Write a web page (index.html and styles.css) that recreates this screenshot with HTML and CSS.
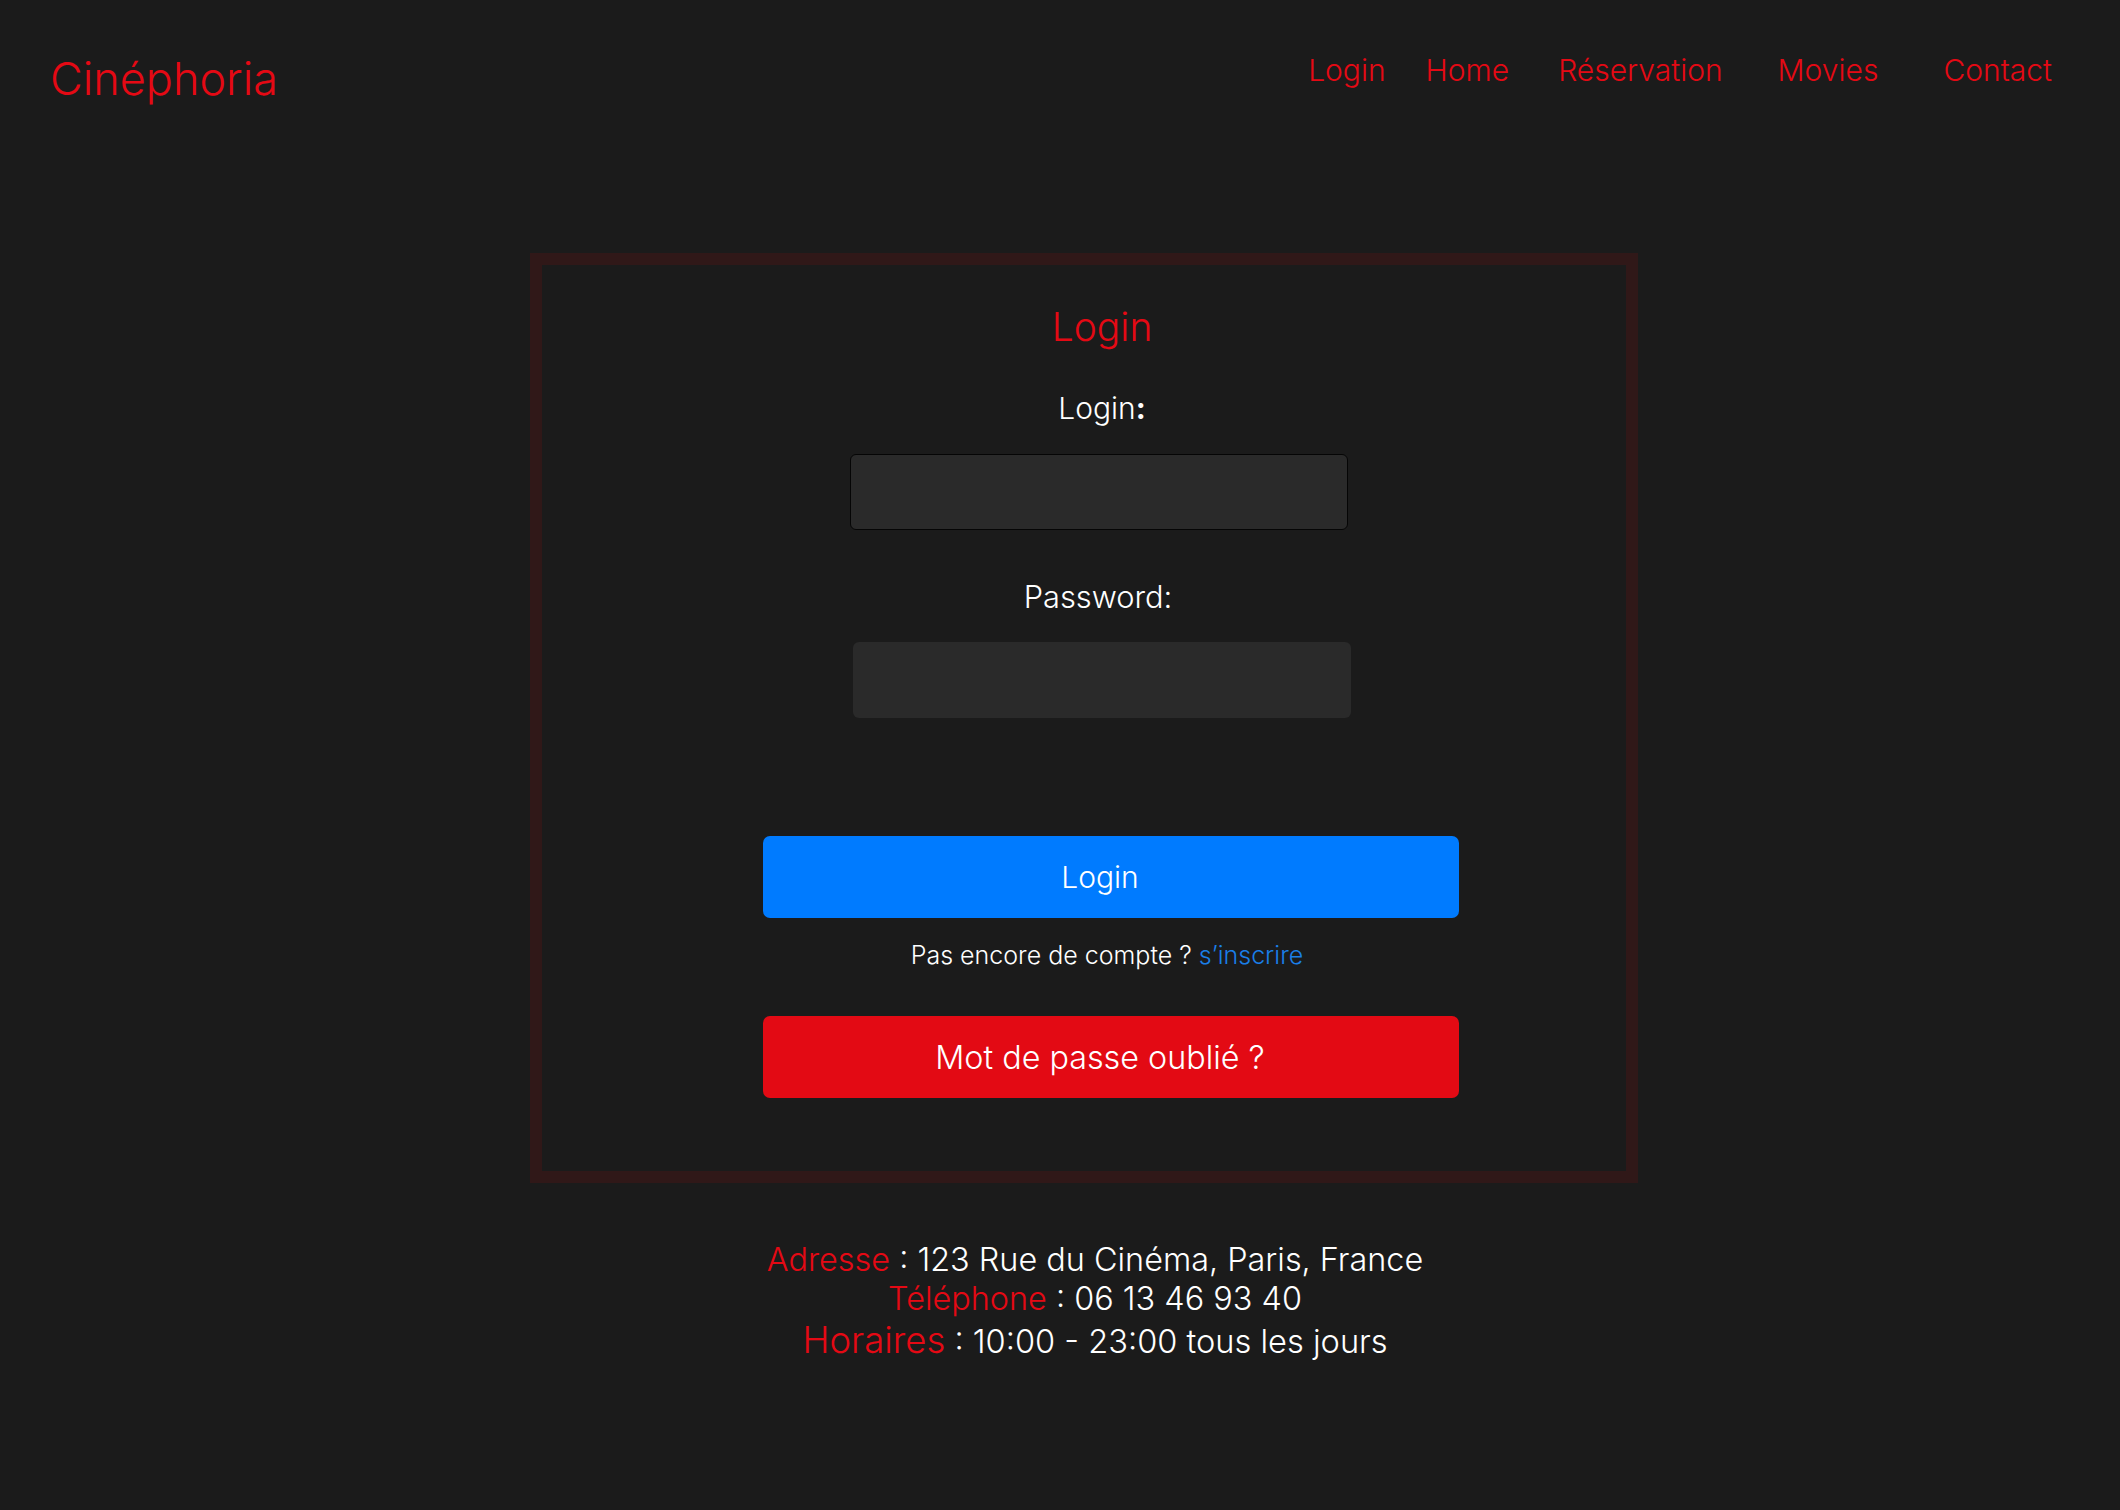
FILE: index.html
```html
<!DOCTYPE html>
<html lang="fr">
<head>
<meta charset="utf-8">
<title>Cinéphoria - Login</title>
<link rel="stylesheet" href="styles.css">
</head>
<body>
<header class="site-header">
  <a class="logo" href="#">Cinéphoria</a>
  <nav class="nav">
    <a class="nav-link" href="#">Login</a>
    <a class="nav-link" href="#">Home</a>
    <a class="nav-link" href="#">Réservation</a>
    <a class="nav-link" href="#">Movies</a>
    <a class="nav-link" href="#">Contact</a>
  </nav>
</header>
<main class="main">
  <section class="login-box">
    <h1 class="login-title">Login</h1>
    <label class="field-label field-label-login" for="login">Login<b class="colon">:</b></label>
    <input class="field-input field-input-bordered" id="login" type="text">
    <label class="field-label field-label-password" for="password">Password:</label>
    <input class="field-input field-input-plain" id="password" type="password">
    <button class="btn btn-primary" type="button">Login</button>
    <p class="signup">Pas encore de compte ? <a class="signup-link" href="#">s’inscrire</a></p>
    <button class="btn btn-danger" type="button">Mot de passe oublié ?</button>
  </section>
</main>
<footer class="footer">
  <div class="footer-line"><span class="accent">Adresse</span> : 123 Rue du Cinéma, Paris, France</div>
  <div class="footer-line"><span class="accent">Téléphone</span> : 06 13 46 93 40</div>
  <div class="footer-line footer-line-last"><span class="accent accent-big">Horaires</span> : 10:00 - 23:00 tous les jours</div>
</footer>
</body>
</html>
```
FILE: styles.css
```css
html, body {
  margin: 0;
  padding: 0;
  background: #1b1b1b;
}
body {
  font-family: Inter, "Noto Sans", "Liberation Sans", sans-serif;
  font-weight: 350;
  color: #ffffff;
  min-height: 1510px;
}
.site-header {
  display: flex;
  justify-content: space-between;
  align-items: flex-start;
  padding: 52px 68px 0 50px;
  height: 253px;
  box-sizing: border-box;
}
.logo {
  color: #e50914;
  text-decoration: none;
  font-size: 45px;
  line-height: 54px;
}
.nav {
  display: flex;
  align-items: flex-start;
}
.nav-link {
  color: #e50914;
  text-decoration: none;
  font-size: 30px;
  line-height: 36px;
}
.nav-link:nth-child(2) { margin-left: 40px; }
.nav-link:nth-child(3) { margin-left: 49px; }
.nav-link:nth-child(4) { margin-left: 55px; }
.nav-link:nth-child(5) { margin-left: 65px; }

.main {
  padding-left: 48px;
  display: flex;
  justify-content: center;
}
.login-box {
  width: 1108px;
  height: 930px;
  box-sizing: border-box;
  border: 12px solid #301818;
  padding: 39px 0 0 36px;
  display: flex;
  flex-direction: column;
  align-items: center;
}
.login-title {
  margin: 0;
  color: #e50914;
  font-weight: 350;
  font-size: 39px;
  line-height: 46px;
}
.field-label {
  display: block;
  font-size: 30px;
  line-height: 35px;
  color: #ffffff;
}
.field-label-login { margin-top: 41px; }
.field-label-password { margin-top: 49px; font-size: 30.8px; margin-left: -8px; }
.colon { font-weight: 700; }
.field-input {
  margin: 28px 0 0 0;
  width: 498px;
  height: 76px;
  box-sizing: border-box;
  background: #2a2a2a;
  border-radius: 6px;
  outline: none;
  color: #fff;
  font-family: inherit;
  font-size: 24px;
}
.field-input-bordered {
  border: 1px solid #050505;
  margin-left: -6px;
}
.field-input-plain {
  border: 0;
}
.btn {
  width: 696px;
  height: 82px;
  border: 0;
  border-radius: 7px;
  color: #ffffff;
  font-family: inherit;
  font-weight: 350;
  cursor: pointer;
  margin-left: 18px;
  padding: 0 22px 0 0;
}
.btn-primary {
  margin-top: 118px;
  background: #007bff;
  font-size: 30px;
}
.btn-danger {
  margin-top: 46px;
  background: #e30a14;
  font-size: 32.3px;
}
.signup {
  margin: 23px 0 0 10px;
  font-size: 25px;
  line-height: 29px;
}
.signup-link {
  color: #1a7fe8;
  text-decoration: none;
}
.footer {
  margin-top: 57px;
  padding-left: 70px;
  text-align: center;
  font-size: 32.4px;
}
.footer-line {
  line-height: 39px;
}
.footer-line-last {
  line-height: 44px;
  font-size: 32.6px;
}
.accent {
  color: #e50914;
}
.accent-big {
  font-size: 36.5px;
}
```
